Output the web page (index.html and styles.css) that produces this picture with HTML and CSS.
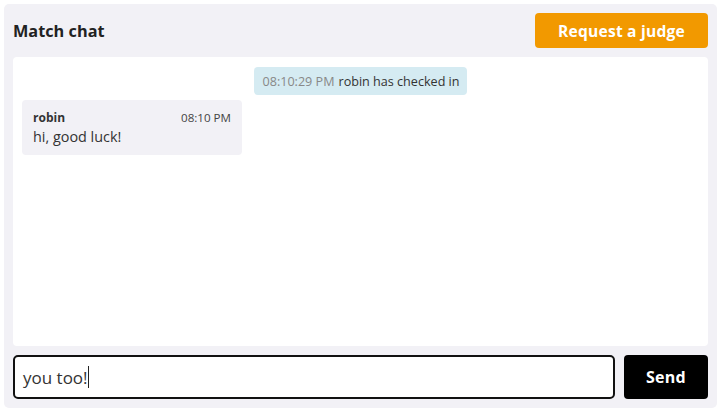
FILE: index.html
```html
<!DOCTYPE html>
<html lang="en">
<head>
<meta charset="utf-8">
<title>Match chat</title>
<link rel="stylesheet" href="styles.css">
</head>
<body>
<div class="panel">
  <div class="header">
    <h2 class="title">Match chat</h2>
    <button class="judge-btn">Request a judge</button>
  </div>
  <div class="messages">
    <div class="system-row">
      <div class="system-msg"><span class="sys-time">08:10:29 PM</span> robin has checked in</div>
    </div>
    <div class="bubble">
      <div class="bubble-head">
        <span class="author">robin</span>
        <span class="msg-time">08:10 PM</span>
      </div>
      <div class="msg-text">hi, good luck!</div>
    </div>
  </div>
  <form class="composer">
    <div class="input-box"><span class="input-text">you too!</span><span class="caret"></span></div>
    <button type="button" class="send-btn">Send</button>
  </form>
</div>
</body>
</html>
```
FILE: styles.css
```css
* { box-sizing: border-box; }
html, body { margin: 0; padding: 0; background: #ffffff; }
body {
  padding: 4px 3px 4px 4px;
  font-family: "Open Sans", "Noto Sans", sans-serif;
  color: #222;
}
.panel {
  width: 713px;
  height: 404px;
  background: #f2f1f6;
  border-radius: 5px;
  padding: 9px;
  display: flex;
  flex-direction: column;
  gap: 9px;
}
.header {
  display: flex;
  align-items: center;
  justify-content: space-between;
  height: 35px;
  flex: none;
}
.title {
  margin: 0;
  font-size: 16.3px;
  font-weight: 700;
  color: #222;
}
.judge-btn {
  height: 35px;
  width: 173px;
  border: none;
  border-radius: 4px;
  background: #f29900;
  color: #fff;
  font-family: inherit;
  font-weight: 700;
  font-size: 15.6px;
  letter-spacing: 0.2px;
}
.messages {
  flex: 1;
  background: #fff;
  border-radius: 4px;
  padding: 10px 9px;
  display: flex;
  flex-direction: column;
  gap: 5px;
}
.system-row {
  display: flex;
  justify-content: center;
}
.system-msg {
  background: #d5ebf2;
  border-radius: 4px;
  height: 28px;
  padding: 0 7px 0 8px;
  display: flex;
  align-items: center;
  gap: 4px;
  font-size: 12.6px;
  color: #333;
}
.sys-time { color: #888; }
.bubble {
  width: 220px;
  background: #f2f1f6;
  border-radius: 4px;
  padding: 9px 11px 8px 11px;
}
.bubble-head {
  display: flex;
  justify-content: space-between;
  align-items: baseline;
  font-size: 12px;
  line-height: 17px;
}
.author { font-weight: 700; color: #333; }
.msg-time { color: #444; font-size: 11.6px; }
.msg-text {
  font-size: 14.4px;
  line-height: 21px;
  color: #333;
}
.composer {
  margin: 0;
  display: flex;
  gap: 9px;
  height: 44px;
  flex: none;
}
.input-box {
  flex: 1;
  border: 2px solid #111;
  border-radius: 5px;
  background: #fff;
  display: flex;
  align-items: center;
  padding-left: 8px;
  font-size: 17px;
  color: #333;
}
.caret {
  display: inline-block;
  width: 1px;
  height: 22px;
  background: #222;
  margin-left: 0;
}
.send-btn {
  width: 84px;
  border: none;
  border-radius: 4px;
  background: #000;
  color: #fff;
  font-family: inherit;
  font-weight: 700;
  font-size: 16px;
  letter-spacing: 0.3px;
}
```
